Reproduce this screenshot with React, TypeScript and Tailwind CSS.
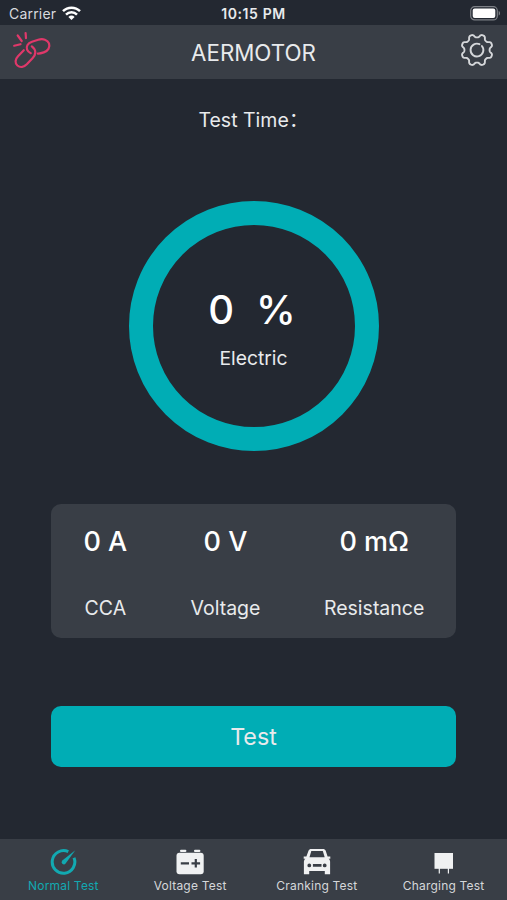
import { useState } from "react";

const READINGS = [
  { label: "CCA", value: "0 A", width: "w-[42px]" },
  { label: "Voltage", value: "0 V", width: "w-[69px]" },
  { label: "Resistance", value: "0 mΩ", width: "w-[99px]" },
];

const WifiIcon = () => (
  <svg width="19" height="15" viewBox="0 0 19 15" fill="none" stroke="#fff" strokeWidth="2.5">
    <path d="M1 5.2a12 12 0 0 1 17 0" />
    <path d="M4 8.6a7.8 7.8 0 0 1 11 0" />
    <path d="M9.5 14 6.4 10.9a4.4 4.4 0 0 1 6.2 0z" fill="#fff" stroke="none" />
  </svg>
);

const BatteryIcon = () => (
  <svg width="31" height="15" viewBox="0 0 31 15">
    <rect x="0.7" y="0.7" width="26.6" height="13.2" rx="4" fill="none" stroke="#7d8086" strokeWidth="1.2" />
    <rect x="2.7" y="2.6" width="22.6" height="9.4" rx="2" fill="#fff" />
    <path d="M28.7 5v4.6c1.8-.7 1.8-3.9 0-4.6z" fill="#7d8086" />
  </svg>
);

const BrokenLinkIcon = () => (
  <svg
    width="48"
    height="46"
    viewBox="0 0 48 46"
    fill="none"
    stroke="#e0386a"
    strokeWidth="2.2"
    strokeLinecap="round"
    strokeLinejoin="round"
  >
    <path d="M9.7 9.5l4 5.5M17.6 7l.4 5.2M6.2 19.7l6.3-1.5" />
    <path d="M22.8 27.2c-3.8-1.500-5-5.200-3.300-8.200 1-1.700 2.500-2.500 4.500-3.200l6.200-2c4.800-1.500 9.400 0 10.800 3.600 1.400 4-1 7.600-5.200 9-2 .7-4 1.300-6 1.200" />
    <path d="M15.8 24.2l-5.800 6c-3 3-3.200 7-.6 9.300 2.800 2.300 6.600 1.600 9.400-1.200l5.700-6c3.400-3.500 4.300-8.300-.7-12" />
  </svg>
);

// eight rounded teeth around the hub
const gearPath = () => {
  const points: string[] = [];
  for (let i = 0; i < 180; i++) {
    const t = (i / 180) * Math.PI * 2;
    const c = Math.cos(8 * t + Math.PI);
    const r = 14.2 + 1.75 * Math.tanh(1.6 * c);
    points.push(`${(18 + r * Math.cos(t)).toFixed(2)} ${(18 + r * Math.sin(t)).toFixed(2)}`);
  }
  return `M${points.join("L")}Z`;
};

const GearIcon = () => (
  <svg width="36" height="36" viewBox="0 0 36 36" fill="none" stroke="#d5d7da" strokeWidth="1.9" strokeLinejoin="round">
    <path d={gearPath()} />
    <path d="M22.9 14a6.400 6.400 0 1 1-2.400-1.800" strokeLinecap="round" />
  </svg>
);

const GaugeIcon = () => (
  <svg width="28" height="28" viewBox="-1 0 28 28" fill="none" stroke="#12a9b1" strokeLinecap="round">
    <path d="M18.3 3.700a11.300 11.300 0 1 0 5.700 6" strokeWidth="3" strokeLinecap="butt" />
    <path d="M25.3 2.200 15.600 15.600a2.200 2.200 0 0 1-3.300-3.200z" fill="#12a9b1" stroke="none" />
  </svg>
);

const BatteryBoxIcon = () => (
  <svg width="28" height="28" viewBox="0 0 28 28" fill="#f0f1f2">
    <rect x="4" y="1.8" width="6.4" height="2.2" rx="1" />
    <rect x="18" y="1.8" width="6.4" height="2.2" rx="1" />
    <rect x="0.5" y="4.7" width="27.2" height="21.6" rx="3" />
    <path d="M4.8 15.300h8.200M15.500 15.300h8.600M19.800 11v8.600" stroke="#393e46" strokeWidth="2.2" />
  </svg>
);

const CarIcon = () => (
  <svg width="28" height="28" viewBox="0 0 28 28">
    <path
      fill="#f0f1f2"
      fillRule="evenodd"
      d="M8.300.9h11.600c1.400 0 2.300.6 2.800 1.900L24.600 8.500h2.700v2.200h-1.700c1 .7 1.500 1.900 1.500 3.300v12.300h-5.300V23H6.200v3.300H.9V14c0-1.400.5-2.600 1.500-3.300H.7V8.500h2.700L5.500 2.800C6 1.500 6.900.9 8.300.9zM8.300 2.900 6.500 9.300h15.200L19.800 2.900zM6.300 15.500a1.900 1.900 0 1 0 0 3.800 1.900 1.900 0 0 0 0-3.800zM21.700 15.500a1.900 1.900 0 1 0 0 3.800 1.900 1.900 0 0 0 0-3.800zM9.900 16v2.700h8.600V16z"
    />
  </svg>
);

const PlugIcon = () => (
  <svg width="28" height="28" viewBox="0 0 28 28" fill="#f0f1f2">
    <rect x="4.5" y="5" width="18.5" height="15.8" />
    <rect x="8.7" y="20" width="1.2" height="5.5" />
    <rect x="17.8" y="20" width="1.2" height="5.5" />
  </svg>
);

const TABS = [
  { name: "Normal Test", Icon: GaugeIcon },
  { name: "Voltage Test", Icon: BatteryBoxIcon },
  { name: "Cranking Test", Icon: CarIcon },
  { name: "Charging Test", Icon: PlugIcon },
];

const App = () => {
  const [activeTab, setActiveTab] = useState("Normal Test");

  return (
    <div className="flex h-[900px] w-[507px] flex-col overflow-hidden bg-[#232831] font-['Inter',sans-serif] text-[#e8eaec]">
      <div className="grid h-[25px] shrink-0 grid-cols-3 items-center px-[8px] pt-[2px]">
        <div className="flex items-center gap-[6px] pl-px text-[14px] tracking-[0.2px] text-[#d8dade]">
          Carrier
          <WifiIcon />
        </div>
        <span className="text-center text-[14px] font-semibold tracking-[0.6px]">10:15 PM</span>
        <div className="-mr-[2px] flex justify-end">
          <BatteryIcon />
        </div>
      </div>

      <header className="flex h-[54px] shrink-0 items-start justify-between bg-[#393e46] pr-[12px] pl-[8px]">
        <button className="mt-px w-[48px]">
          <BrokenLinkIcon />
        </button>
        <h1 className="mt-[12px] ml-[4px] text-[22.3px] leading-8">AERMOTOR</h1>
        <button className="mt-[7px] flex w-[48px] justify-end">
          <GearIcon />
        </button>
      </header>

      <main className="flex flex-1 flex-col items-center">
        <p className="mt-[29px] flex h-6 pr-[10px] text-[19.5px] leading-6">
          <span>Test Time</span>
          <span className="font-['Noto_Sans_CJK_JP',sans-serif] [font-feature-settings:'halt']">：</span>
        </p>

        <div className="mt-[69px] flex size-[250px] flex-col items-center rounded-full border-[24px] border-[#00adb5]">
          <p className="mt-[61px] -ml-[3px] flex gap-[23px] text-[40px] leading-[48px] font-medium text-white">
            <span className="tracking-[-1px]">0</span>
            <span>%</span>
          </p>
          <p className="mt-[12px] text-[19.3px] leading-6">Electric</p>
        </div>

        <div className="mt-[53px] flex h-[134px] w-[405px] justify-around rounded-[10px] bg-[#393e46] pl-px">
          {READINGS.map((item) => (
            <div key={item.label} className={`${item.width} flex flex-col items-center whitespace-nowrap`}>
              <span className="mt-[22px] text-[27px] leading-8 font-medium text-white">{item.value}</span>
              <span className="mt-[38px] text-[19.5px] leading-6">{item.label}</span>
            </div>
          ))}
        </div>

        <button className="mt-[68px] h-[61px] w-[405px] rounded-[10px] bg-[#00adb5] pt-[2px] text-[23.3px]">Test</button>
      </main>

      <nav className="grid h-[61px] shrink-0 grid-cols-4 bg-[#393e46]">
        {TABS.map(({ name, Icon }) => (
          <button
            key={name}
            onClick={() => setActiveTab(name)}
            className={`flex flex-col items-center gap-[2px] pt-[9px] text-[12px] leading-4 tracking-[0.2px] ${
              activeTab === name ? "text-[#12a9b1]" : "text-[#d5d7da]"
            }`}
          >
            <Icon />
            {name}
          </button>
        ))}
      </nav>
    </div>
  );
};

export default App;
